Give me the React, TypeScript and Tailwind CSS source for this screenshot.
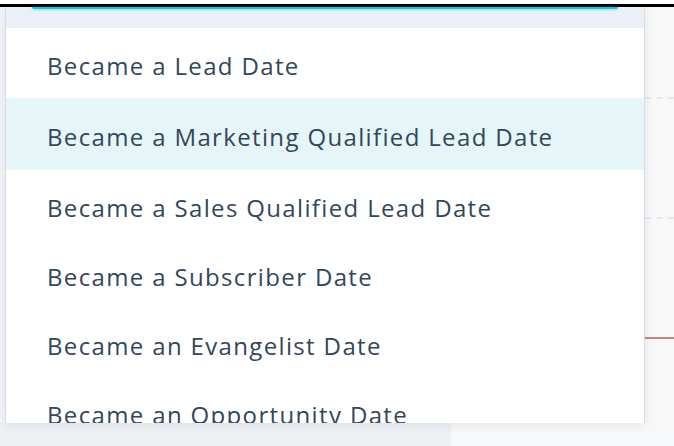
import React from "react";

const items = [
  "Became a Lead Date",
  "Became a Marketing Qualified Lead Date",
  "Became a Sales Qualified Lead Date",
  "Became a Subscriber Date",
  "Became an Evangelist Date",
  "Became an Opportunity Date",
];

const heights = ["h-[70px]", "h-[72px] bg-[#e5f5f8]", "h-[70px]", "h-[69px]", "h-[69px]", "h-[69px]"];

export default function App() {
  return (
    <div
      className="w-[674px] h-[446px] overflow-hidden bg-white flex flex-col"
      style={{ fontFamily: "'Open Sans', Lato, sans-serif" }}
    >
      <div className="h-[4px] bg-white" />
      <div className="h-[3px] bg-black" />
      <div className="flex h-[416px]">
        <div className="w-[5px] bg-[#f3f5f8]" />
        <div className="relative z-10 w-[640px] bg-white border-x border-[#d6dee8] shadow-[0_2px_10px_rgba(45,62,80,0.10)] flex flex-col overflow-hidden">
          <div className="h-[21px] bg-[#eaf0f6] pl-[26px] pr-[26px] shrink-0">
            <div className="h-[2px] bg-[#00d0e4] rounded-b-sm shadow-[0_0_3px_#00d0e4]" />
          </div>
          {items.map((t, i) => (
            <div
              key={t}
              className={
                "shrink-0 flex items-center pl-[41px] pt-[5px] text-[24px] tracking-[1.35px] text-[#33475b] leading-none whitespace-nowrap " +
                heights[i]
              }
            >
              {t}
            </div>
          ))}
        </div>
        <div className="flex-1 bg-[#f8f8f9] flex flex-col">
          <div className="h-[90px]" />
          <div className="h-0 border-t-2 border-dashed border-[#e3e7ee]" />
          <div className="h-[118px]" />
          <div className="h-0 border-t-2 border-dashed border-[#e3e7ee]" />
          <div className="h-[118px]" />
          <div className="h-[2px] bg-[#c7877f]" />
        </div>
      </div>
      <div className="flex flex-1">
        <div className="w-[451px] bg-[#eef1f4]" />
        <div className="flex-1 bg-[#f7f8f9]" />
      </div>
    </div>
  );
}
